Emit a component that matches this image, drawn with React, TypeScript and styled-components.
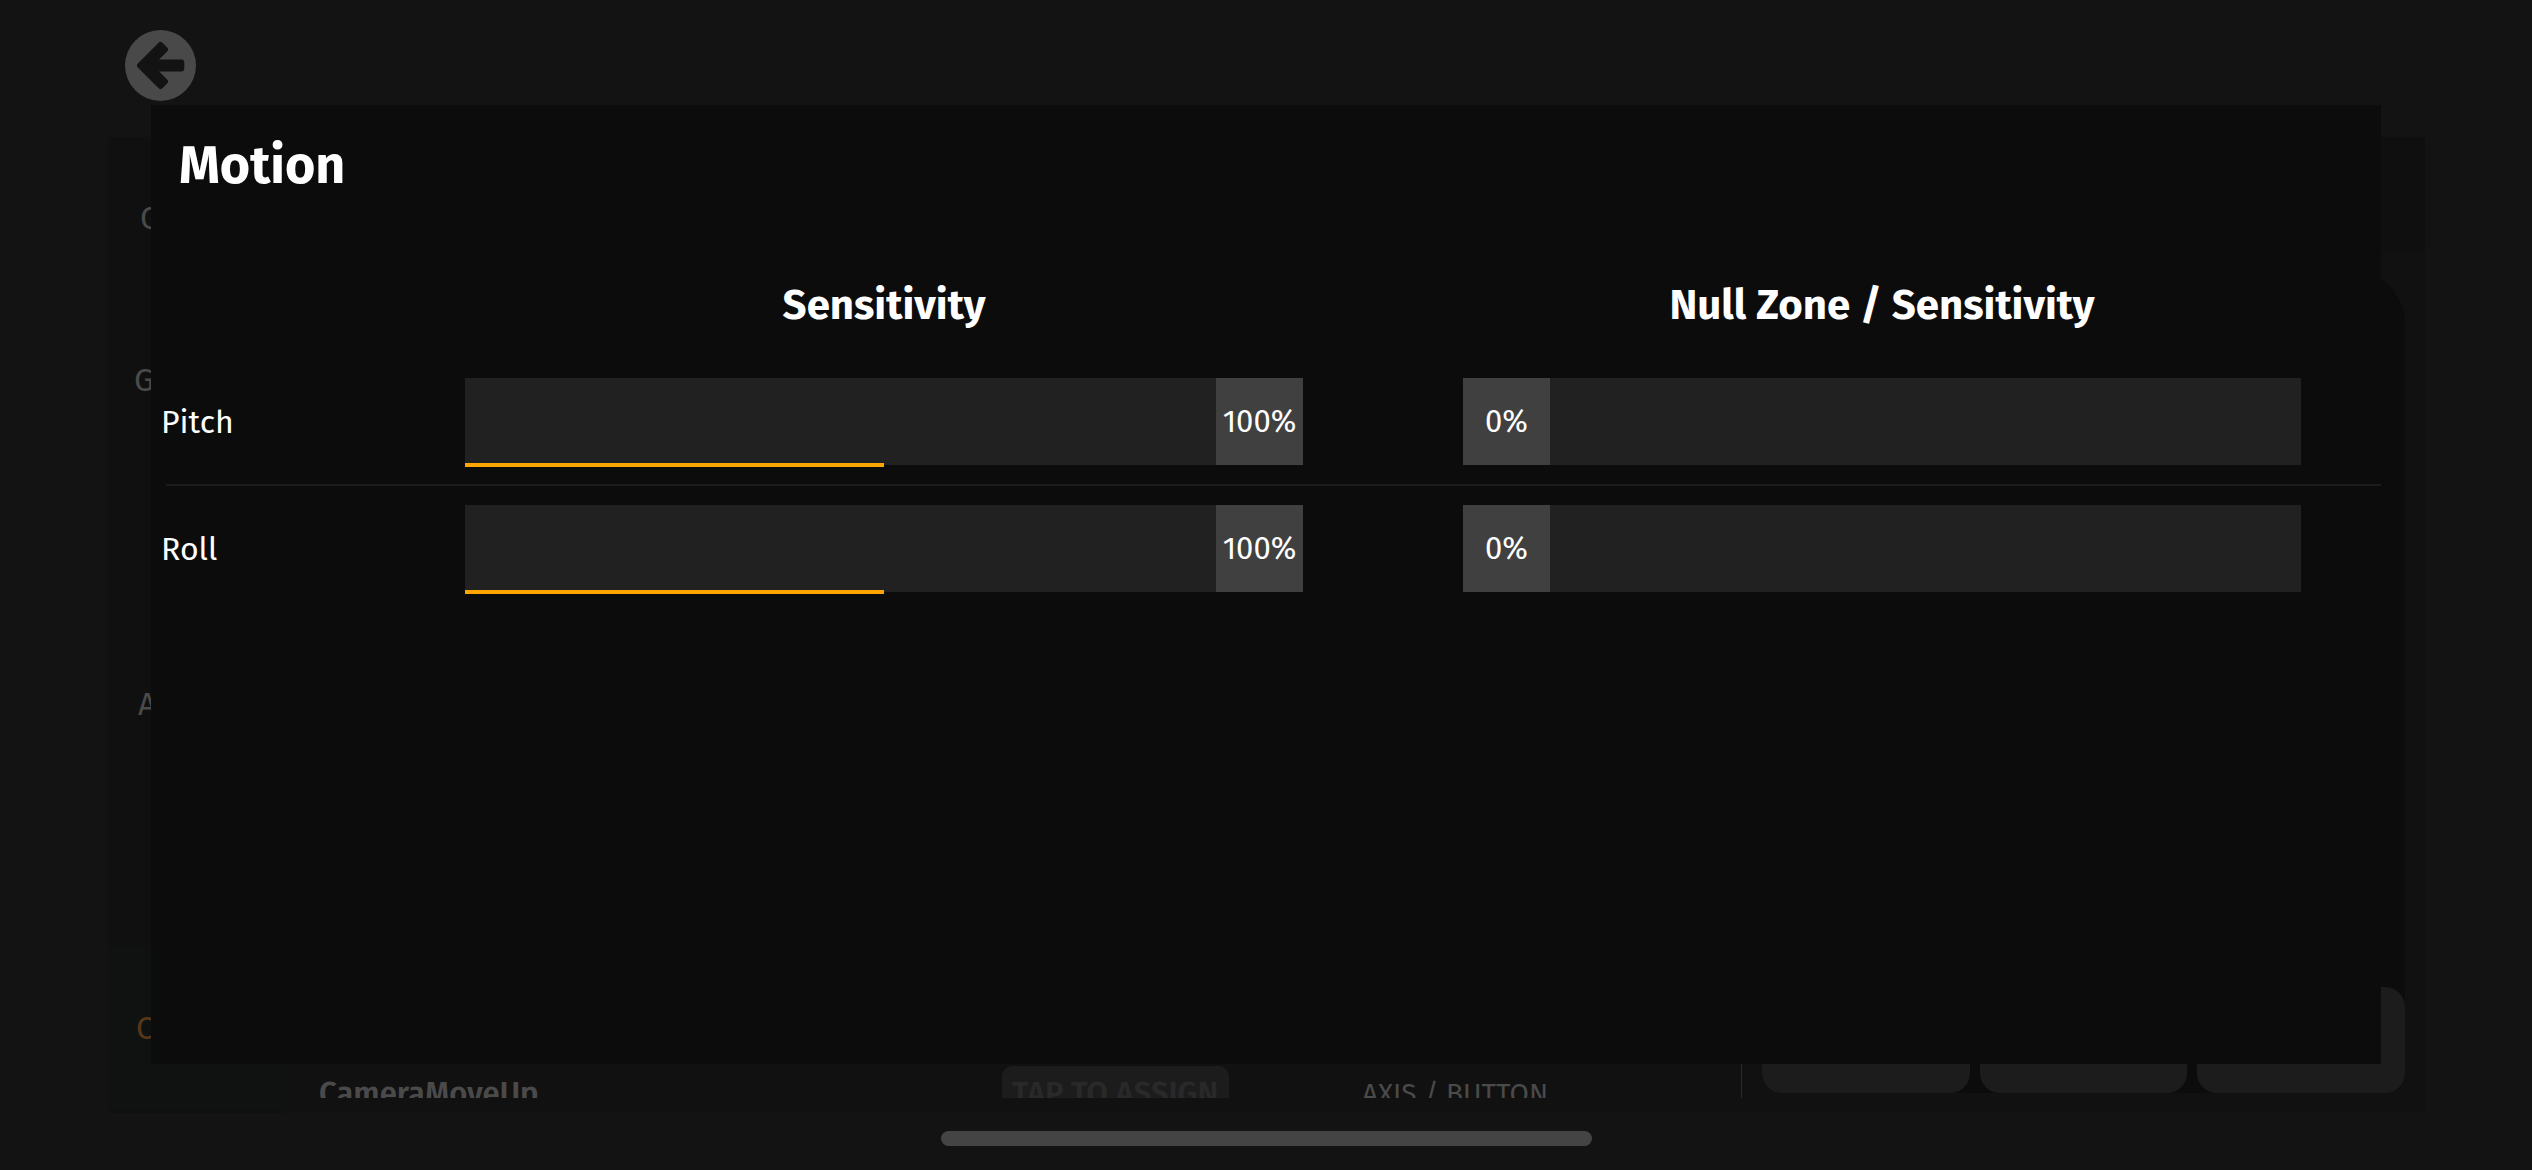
import React, { useState } from "react";
import styled, { createGlobalStyle } from "styled-components";

const GlobalStyle = createGlobalStyle`
  * { box-sizing: border-box; }
  body {
    margin: 0;
    background: #131313;
    color: #fff;
    font-family: "Fira Sans", "Noto Sans", sans-serif;
    font-size: 32px;
    line-height: 40px;
  }
  button {
    margin: 0;
    padding: 0;
    border: 0;
    background: none;
    color: inherit;
    font: inherit;
    cursor: pointer;
  }
  h1, h2 { margin: 0; }
`;

const THUMB = 87;

const Screen = styled.div`
  position: relative;
  display: flex;
  flex-direction: column;
  height: 100vh;
  min-height: 700px;
  overflow: hidden;
`;

const TopBar = styled.header`
  flex: none;
  height: 137px;
  padding: 30px 125px 0;
`;

const BackButton = styled.button`
  display: block;
  width: 71px;
  height: 71px;
  svg { display: block; }
`;

const Settings = styled.main`
  flex: 1;
  min-height: 0;
  display: flex;
  margin: 0 107px 0 108px;
  background: #111111;
`;

const Tabs = styled.nav`
  flex: none;
  display: flex;
  flex-direction: column;
  width: 177px;
  padding-bottom: 4px;
  background: #101010;
`;

const Tab = styled.button<{ $inset: number; $active?: boolean }>`
  flex: 1;
  padding-left: ${(p) => p.$inset}px;
  text-align: left;
  color: ${(p) => (p.$active ? "#56371a" : "#4a4a4a")};
  background: ${(p) => (p.$active ? "#0f1210" : "transparent")};
`;

const Content = styled.section`
  flex: 1;
  min-width: 0;
  display: flex;
  flex-direction: column;
`;

const ContentHeader = styled.div`
  flex: none;
  height: 116px;
  background: #0f0f0f;
`;

const ContentBody = styled.div`
  flex: 1;
  min-height: 0;
  display: flex;
`;

const Bindings = styled.div`
  flex: 1;
  min-width: 0;
  display: flex;
  flex-direction: column;
  justify-content: flex-end;
  margin-bottom: 15px;
  border-right: 1px solid #2c2c2c;
`;

const BindingViewport = styled.div`
  height: 32px;
  overflow: hidden;
`;

const BindingRow = styled.div`
  display: grid;
  grid-template-columns: 1fr 340px 340px;
  align-items: center;
  justify-items: center;
  height: 56px;
  padding: 0 116px 0 34px;
  color: #4a4a4a;
`;

const BindingName = styled.span`
  justify-self: start;
  font-size: 31px;
  font-weight: 600;
`;

const AssignButton = styled.button`
  width: 227px;
  height: 56px;
  border-radius: 10px;
  background: #1c1c1c;
  color: #292929;
  font-size: 31px;
  font-weight: 600;
  white-space: nowrap;
`;

const BindingKind = styled.span`
  font-size: 28px;
`;

const Keypad = styled.div`
  flex: none;
  display: flex;
  align-items: flex-end;
  gap: 10px;
  width: 643px;
  margin: 17px 20px 20px;
  border-radius: 54px 54px 20px 20px;
  background: #0c0c0c;
`;

const Key = styled.button`
  flex: 1;
  height: 106px;
  border-radius: 20px;
  background: #1c1c1c;
`;

const Footer = styled.footer`
  flex: none;
  display: flex;
  justify-content: center;
  height: 57px;
  padding-top: 18px;
`;

const HomeIndicator = styled.div`
  width: 651px;
  height: 15px;
  border-radius: 8px;
  background: #444444;
`;

const Dialog = styled.section`
  position: absolute;
  inset: 105px 151px 106px;
  background: #0c0c0c;
`;

const DialogTitle = styled.h1`
  padding: 25px 28px 0;
  font-size: 52px;
  line-height: 72px;
  font-weight: 700;
`;

const AxisGrid = styled.div`
  display: grid;
  grid-template-columns: 234px 1fr 1fr;
  align-items: center;
`;

const HeadingRow = styled(AxisGrid)`
  padding: 66px 0 23px;
`;

const ColumnHeading = styled.h2`
  font-size: 42px;
  line-height: 74px;
  font-weight: 700;
  text-align: center;
`;

const AxisRow = styled(AxisGrid)`
  padding: 13px 0 19px;
`;

const Divider = styled.hr`
  height: 2px;
  margin: 0 0 6px 15px;
  border: 0;
  background: #1c1c1c;
`;

const AxisName = styled.span`
  padding-left: 10px;
`;

const SliderBox = styled.label`
  position: relative;
  display: block;
  margin: 0 80px;
`;

const Range = styled.input`
  appearance: none;
  display: block;
  width: 100%;
  height: ${THUMB}px;
  margin: 0;
  background: #212121;
  cursor: pointer;
  &::-webkit-slider-thumb {
    appearance: none;
    width: ${THUMB}px;
    height: ${THUMB}px;
    background: #404040;
  }
  &::-moz-range-thumb {
    width: ${THUMB}px;
    height: ${THUMB}px;
    border: 0;
    border-radius: 0;
    background: #404040;
  }
`;

const ThumbText = styled.output`
  position: absolute;
  top: 0;
  width: ${THUMB}px;
  font-size: 31px;
  line-height: ${THUMB}px;
  text-align: center;
  pointer-events: none;
`;

const Level = styled.div`
  position: absolute;
  left: 0;
  bottom: -2px;
  height: 4px;
  background: #ffa500;
  pointer-events: none;
`;

function Slider({ labelledBy, initial, level }: { labelledBy: string; initial: number; level?: number }) {
  const [value, setValue] = useState(initial);
  return (
    <SliderBox>
      <Range
        type="range"
        min={0}
        max={100}
        value={value}
        aria-labelledby={labelledBy}
        onChange={(e) => setValue(Number(e.target.value))}
      />
      <ThumbText style={{ left: `calc((100% - ${THUMB}px) * ${value / 100})` }}>{value}%</ThumbText>
      {level !== undefined && <Level style={{ width: `${level}%` }} />}
    </SliderBox>
  );
}

const tabs = [
  { label: "C", inset: 32 },
  { label: "G", inset: 26 },
  { label: "", inset: 28 },
  { label: "A", inset: 30 },
  { label: "", inset: 28 },
  { label: "C", inset: 28, active: true },
];

const axes = [
  { id: "pitch", name: "Pitch" },
  { id: "roll", name: "Roll" },
];

export default function App() {
  return (
    <>
      <GlobalStyle />
      <Screen>
        <TopBar>
          <BackButton type="button" aria-label="Back">
            <svg width="71" height="71" viewBox="0 0 71 71" aria-hidden="true">
              <circle cx="35.5" cy="35.5" r="35.5" fill="#494949" />
              <path
                d="M15 35.5 35.5 15 40 19.5 27 32.5H56.3V38.5H27L40 51.5 35.5 56Z"
                fill="#131313"
                stroke="#131313"
                strokeWidth="6"
                strokeLinejoin="round"
              />
            </svg>
          </BackButton>
        </TopBar>
        <Settings>
          <Tabs>
            {tabs.map((t, i) => (
              <Tab key={i} type="button" $inset={t.inset} $active={t.active}>
                {t.label}
              </Tab>
            ))}
          </Tabs>
          <Content>
            <ContentHeader />
            <ContentBody>
              <Bindings>
                <BindingViewport>
                  <BindingRow>
                    <BindingName>CameraMoveUp</BindingName>
                    <AssignButton type="button">TAP TO ASSIGN</AssignButton>
                    <BindingKind>AXIS / BUTTON</BindingKind>
                  </BindingRow>
                </BindingViewport>
              </Bindings>
              <Keypad>
                <Key type="button" aria-label="Key 1" />
                <Key type="button" aria-label="Key 2" />
                <Key type="button" aria-label="Key 3" />
              </Keypad>
            </ContentBody>
          </Content>
        </Settings>
        <Footer>
          <HomeIndicator />
        </Footer>
        <Dialog role="dialog" aria-labelledby="dialog-title">
          <DialogTitle id="dialog-title">Motion</DialogTitle>
          <HeadingRow>
            <span />
            <ColumnHeading id="sensitivity">Sensitivity</ColumnHeading>
            <ColumnHeading id="null-zone">Null Zone / Sensitivity</ColumnHeading>
          </HeadingRow>
          {axes.map((axis, i) => (
            <React.Fragment key={axis.id}>
              {i > 0 && <Divider />}
              <AxisRow>
                <AxisName id={axis.id}>{axis.name}</AxisName>
                <Slider labelledBy={`${axis.id} sensitivity`} initial={100} level={50} />
                <Slider labelledBy={`${axis.id} null-zone`} initial={0} />
              </AxisRow>
            </React.Fragment>
          ))}
        </Dialog>
      </Screen>
    </>
  );
}
